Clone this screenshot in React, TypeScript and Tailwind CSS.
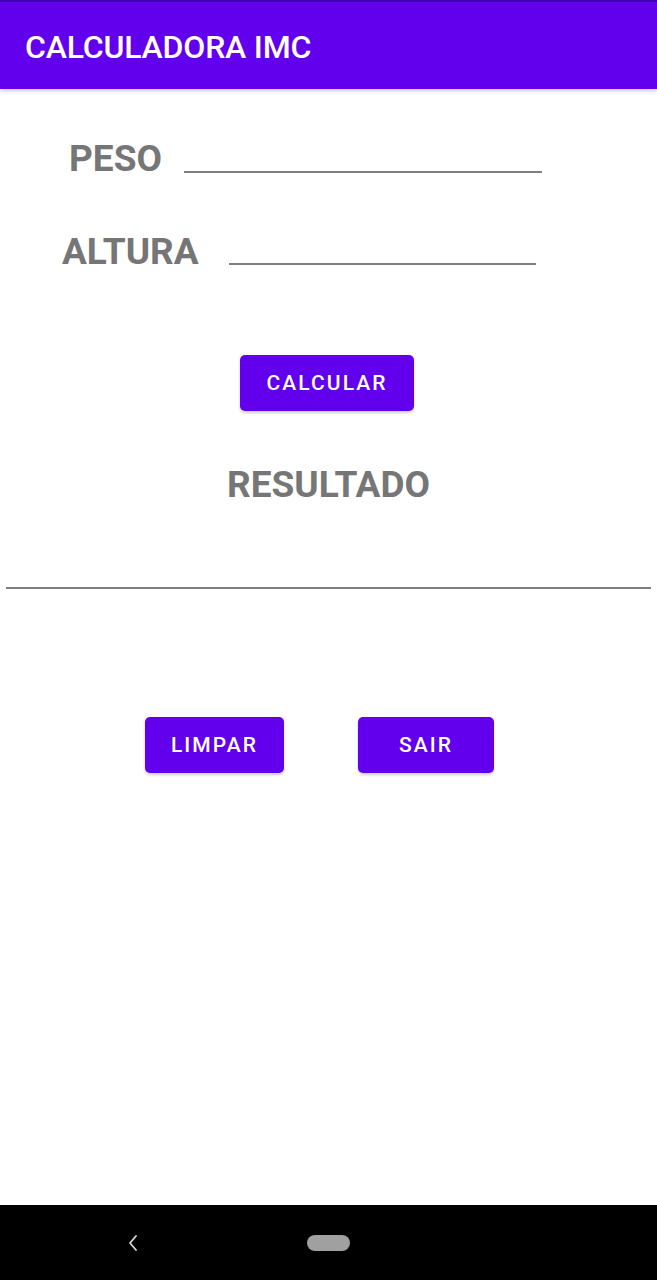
import React from "react";

export default function App() {
  return (
    <div className="min-h-screen flex flex-col bg-white" style={{ fontFamily: "Roboto, 'Noto Sans', sans-serif" }}>
      {/* App bar */}
      <div className="relative h-[89px] bg-[#6200ee] shadow-[0_2px_4px_rgba(0,0,0,0.2)]">
        <div className="h-[2px] bg-[#3f00b5]" />
        <div className="pl-[25px] pt-[29px] text-[32px] leading-none font-medium text-white tracking-[-0.2px]">CALCULADORA IMC</div>
      </div>

      {/* PESO row */}
      <div className="flex items-end mt-[51px]">
        <div className="ml-[69px] text-[37px] leading-none font-bold text-[#767676]">PESO</div>
        <div className="ml-[22px] mb-[4px] w-[358px] h-[2px] bg-[#7f7f7f]" />
      </div>

      {/* ALTURA row */}
      <div className="flex items-end mt-[56px]">
        <div className="ml-[62px] text-[37px] leading-none font-bold text-[#767676]">ALTURA</div>
        <div className="ml-[30px] mb-[5px] w-[307px] h-[2px] bg-[#7f7f7f]" />
      </div>

      {/* CALCULAR */}
      <div className="flex mt-[85px]">
        <button className="ml-[240px] w-[174px] h-[56px] pt-[2px] rounded-[5px] bg-[#6200ee] text-white text-[21px] font-medium tracking-[0.1em] shadow-[0_2px_3px_rgba(0,0,0,0.2)]">
          CALCULAR
        </button>
      </div>

      {/* RESULTADO */}
      <div className="mt-[55px] flex justify-center">
        <div className="text-[37px] leading-none font-bold text-[#767676]">RESULTADO</div>
      </div>

      <div className="mt-[84px] mx-[6px] h-[2px] bg-[#7f7f7f]" />

      {/* Buttons */}
      <div className="flex mt-[128px]">
        <button className="ml-[145px] w-[139px] h-[56px] pt-[2px] rounded-[5px] bg-[#6200ee] text-white text-[21px] font-medium tracking-[0.1em] shadow-[0_2px_3px_rgba(0,0,0,0.2)]">
          LIMPAR
        </button>
        <button className="ml-[74px] w-[136px] h-[56px] pt-[2px] rounded-[5px] bg-[#6200ee] text-white text-[21px] font-medium tracking-[0.1em] shadow-[0_2px_3px_rgba(0,0,0,0.2)]">
          SAIR
        </button>
      </div>

      <div className="flex-1" />

      {/* Nav bar */}
      <div className="h-[75px] bg-black flex items-center">
        <svg className="ml-[127px]" width="12" height="20" viewBox="0 0 12 20">
          <polyline points="9,3 3,10 9,17" fill="none" stroke="#d8d8d8" strokeWidth="1.8" strokeLinecap="round" strokeLinejoin="round" />
        </svg>
        <div className="ml-[168px] w-[43px] h-[16px] rounded-full bg-[#a0a0a0]" />
      </div>
    </div>
  );
}
